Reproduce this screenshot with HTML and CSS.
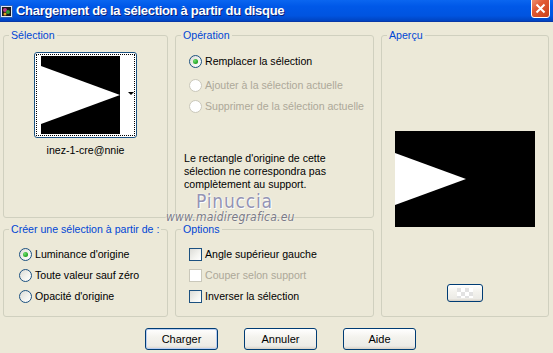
FILE: index.html
```html
<!DOCTYPE html>
<html lang="fr">
<head>
    <meta charset="UTF-8">
    <title>Chargement de la sélection à partir du disque</title>
    <link rel="stylesheet" href="styles.css">
</head>
<body>
    <div class="window">
        <div class="titlebar">
            <svg class="app-icon" width="13" height="13" viewBox="0 0 13 13">
                <rect x="0" y="0" width="13" height="13" fill="#2a5fb8"/>
                <rect x="1" y="1" width="11" height="11" fill="#dfe8f5"/>
                <rect x="2" y="2" width="9" height="9" fill="#1b1b1b"/>
                <circle cx="5" cy="5" r="2" fill="#c03a8a"/>
                <circle cx="8" cy="7" r="2" fill="#2f9e3a"/>
                <circle cx="5" cy="9" r="1.5" fill="#e0a020"/>
            </svg>
            <span class="title">Chargement de la sélection à partir du disque</span>
            <button class="close-btn">
                <svg width="11" height="11" viewBox="0 0 11 11">
                    <path d="M1.5 1.5 L9.5 9.5 M9.5 1.5 L1.5 9.5" stroke="#fff" stroke-width="2"/>
                </svg>
            </button>
        </div>

        <div class="dialog">
            <div class="panels">
                <fieldset class="group group-selection">
                    <legend>Sélection</legend>
                    <div class="thumb">
                        <div class="thumb-focus">
                            <svg class="thumb-image" width="79" height="78" viewBox="0 0 79 78">
                                <rect width="79" height="78" fill="#000"/>
                                <polygon points="0,10 79,39 0,68" fill="#fff"/>
                            </svg>
                            <span class="thumb-arrow"></span>
                        </div>
                    </div>
                    <p class="thumb-name">inez-1-cre@nnie</p>
                </fieldset>

                <fieldset class="group group-operation">
                    <legend>Opération</legend>
                    <label class="option first"><span class="radio checked"></span>Remplacer la sélection</label>
                    <label class="option disabled"><span class="radio"></span>Ajouter à la sélection actuelle</label>
                    <label class="option disabled"><span class="radio"></span>Supprimer de la sélection actuelle</label>
                    <p class="note">Le rectangle d'origine de cette<br>sélection ne correspondra pas<br>complètement au support.</p>
                </fieldset>

                <fieldset class="group group-preview">
                    <legend>Aperçu</legend>
                    <svg class="preview" width="140" height="96" viewBox="0 0 140 96">
                        <rect width="140" height="96" fill="#000"/>
                        <polygon points="0,22 71,48 0,74" fill="#fff"/>
                    </svg>
                    <button class="btn btn-small"><span class="checker"></span></button>
                </fieldset>

                <fieldset class="group group-source">
                    <legend>Créer une sélection à partir de :</legend>
                    <label class="option"><span class="radio checked"></span>Luminance d'origine</label>
                    <label class="option"><span class="radio"></span>Toute valeur sauf zéro</label>
                    <label class="option"><span class="radio"></span>Opacité d'origine</label>
                </fieldset>

                <fieldset class="group group-options">
                    <legend>Options</legend>
                    <label class="option"><span class="checkbox"></span>Angle supérieur gauche</label>
                    <label class="option disabled"><span class="checkbox"></span>Couper selon support</label>
                    <label class="option"><span class="checkbox"></span>Inverser la sélection</label>
                </fieldset>
            </div>

            <div class="actions">
                <button class="btn btn-default">Charger</button>
                <button class="btn">Annuler</button>
                <button class="btn">Aide</button>
            </div>

            <div class="watermark">
                <span class="wm-name">Pinuccia</span>
                <span class="wm-site">www.maidiregrafica.eu</span>
            </div>
        </div>
    </div>
</body>
</html>
```

FILE: styles.css
```css
* {
    box-sizing: border-box;
}

body {
    margin: 0;
    background-color: #ece9d8;
    font-family: 'Liberation Sans', Arial, sans-serif;
    font-size: 10.6px;
    color: #000;
}

.window {
    width: 553px;
    height: 353px;
    overflow: hidden;
}

/* barre de titre */
.titlebar {
    height: 22px;
    display: flex;
    align-items: center;
    background: linear-gradient(#0a66f0 0%, #0058e8 30%, #0054e0 75%, #0043c0 100%);
    border-bottom: 1px solid #0838a8;
}

.app-icon {
    margin-top: 1px;
    flex: none;
}

.title {
    margin-left: 3px;
    color: #fff;
    font-weight: bold;
    font-size: 13px;
    letter-spacing: -0.3px;
    text-shadow: 1px 1px 0 #0a1f78;
}

.close-btn {
    margin-left: auto;
    margin-right: 3px;
    align-self: flex-start;
    margin-top: -3px;
    width: 19px;
    height: 21px;
    padding: 0 0 3px;
    border: 1px solid #fff;
    border-radius: 3px;
    background: linear-gradient(135deg, #ef9a7c 0%, #e25a34 40%, #c8401a 100%);
    display: flex;
    align-items: flex-end;
    justify-content: center;
}

.dialog {
    position: relative;
    padding: 7px 0 0 3px;
}

.panels {
    display: grid;
    grid-template-columns: 165px 199px 168px;
    grid-template-rows: 189px 94px;
    column-gap: 7px;
    row-gap: 5px;
}

/* cadres de groupe */
.group {
    margin: 0;
    padding: 0;
    min-width: 0;
    border: 1px solid #d0d0bf;
    border-radius: 3px;
}

.group legend {
    margin-left: 5px;
    padding: 0 2px;
    color: #0046d5;
    line-height: 13px;
    white-space: nowrap;
}

.group-selection {
    display: flex;
    flex-direction: column;
    align-items: center;
    padding-top: 10px;
}

.group-operation {
    grid-column: 2;
    grid-row: 1;
    padding-top: 9px;
}

.group-preview {
    grid-column: 3;
    grid-row: 1 / 3;
    display: flex;
    flex-direction: column;
    align-items: center;
}

.group-source {
    grid-column: 1;
    grid-row: 2;
    padding-top: 8px;
}

.group-options {
    grid-column: 2;
    grid-row: 2;
    padding-top: 8px;
}

/* vignette */
.thumb {
    width: 103px;
    height: 86px;
    border: 1px solid #1c5180;
    border-radius: 3px;
    padding: 1px;
    background: #fff;
}

.thumb-focus {
    height: 100%;
    border: 1px dotted #000;
    display: flex;
    align-items: flex-start;
    padding: 1px 0 0 4px;
}

.thumb-image {
    display: block;
}

.thumb-arrow {
    margin: 36px 0 0 8px;
    border-left: 3px solid transparent;
    border-right: 3px solid transparent;
    border-top: 3px solid #000;
}

.thumb-name {
    margin: 6px 0 0;
    line-height: 13px;
}

/* boutons radio et cases */
.option {
    display: flex;
    align-items: center;
    height: 21px;
    gap: 3px;
    line-height: 13px;
}

.group-operation .option,
.group-options .option {
    margin-left: 13px;
}

.group-source .option {
    margin-left: 15px;
}

.option.first {
    margin-bottom: 3px;
}

.option.disabled {
    color: #aca899;
}

.radio {
    width: 13px;
    height: 13px;
    border: 1px solid #1c5180;
    border-radius: 50%;
    background: linear-gradient(135deg, #dcdcd7 0%, #f4f4f0 60%, #fff 100%);
    display: flex;
    align-items: center;
    justify-content: center;
    flex: none;
}

.radio.checked::after {
    content: "";
    width: 5px;
    height: 5px;
    border-radius: 50%;
    background: radial-gradient(circle at 35% 35%, #6ee06e, #21a121 70%);
}

.checkbox {
    width: 13px;
    height: 13px;
    border: 1px solid #1c5180;
    background: linear-gradient(135deg, #dcdcd7 0%, #f4f4f0 60%, #fff 100%);
    flex: none;
}

.disabled .radio,
.disabled .checkbox {
    border-color: #cac8bb;
    background: #fff;
}

.note {
    margin: 35px 0 0 8px;
    line-height: 13px;
}

/* aperçu */
.preview {
    display: block;
    margin-top: 89px;
}

.btn {
    font-family: 'Liberation Sans', Arial, sans-serif;
    font-size: 11px;
    color: #000;
    width: 73px;
    height: 22px;
    padding: 0;
    border: 1px solid #003c74;
    border-radius: 3px;
    background: linear-gradient(#ffffff 0%, #f4f3ee 40%, #ecebe6 85%, #d6d0c5 100%);
}

.btn-default {
    box-shadow: inset 0 0 0 1px #b8cdf2;
}

.btn-small {
    width: 36px;
    height: 18px;
    margin-top: 57px;
    display: flex;
    align-items: center;
    justify-content: center;
}

.checker {
    width: 16px;
    height: 10px;
    background: repeating-conic-gradient(#ffffff 0 25%, #e2e2e2 0 50%) 0 0 / 8px 8px;
}

/* boutons du bas */
.actions {
    display: flex;
    justify-content: center;
    gap: 26px;
    margin-top: 11px;
    padding-left: 5px;
}

/* filigrane */
.watermark {
    position: absolute;
    left: 166px;
    top: 170px;
    display: flex;
    flex-direction: column;
    pointer-events: none;
}

.wm-name {
    margin-left: 30px;
    font-family: 'DejaVu Sans Condensed', 'DejaVu Sans', sans-serif;
    font-size: 19px;
    line-height: 18px;
    color: #9494b4;
    letter-spacing: 0.8px;
    text-shadow: 0 0 2px #fff, 1px 1px 0 #fff;
}

.wm-site {
    margin-top: 1px;
    font-family: 'DejaVu Sans Condensed', 'DejaVu Sans', sans-serif;
    font-style: italic;
    font-size: 12px;
    line-height: 12px;
    color: #7a7a86;
    letter-spacing: 0.2px;
    text-shadow: 0 0 2px #fff;
}
```
